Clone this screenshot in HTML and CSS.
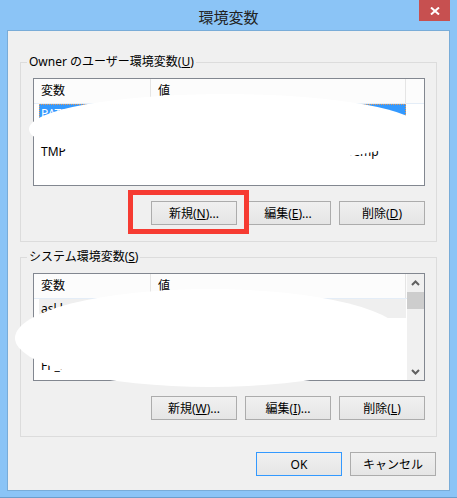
FILE: index.html
```html
<!DOCTYPE html>
<html lang="ja">
<head>
    <meta charset="UTF-8">
    <meta name="viewport" content="width=device-width, initial-scale=1.0">
    <title>環境変数</title>
    <link rel="stylesheet" href="styles.css">
</head>
<body>
    <div class="window">
        <div class="titlebar">
            <span></span>
            <h1 class="title">環境変数</h1>
            <button class="close-btn" aria-label="閉じる">
                <svg width="10" height="8" viewBox="0 0 10 8">
                    <path d="M1 0.5 L9 7.5 M9 0.5 L1 7.5" stroke="#fff" stroke-width="2" fill="none"/>
                </svg>
            </button>
        </div>

        <div class="client">
            <fieldset class="group">
                <legend>Owner のユーザー環境変数(<u>U</u>)</legend>
                <div class="list">
                    <div class="list-body">
                        <div class="list-head">
                            <span class="col-name">変数</span>
                            <span class="col-value">値</span>
                        </div>
                        <div class="row selected">
                            <span>PATH</span>
                            <span>C:\Users\Owner\AppData\Local\bin</span>
                        </div>
                        <div class="row">
                            <span>TEMP</span>
                            <span>%USERPROFILE%\AppData\Local\Temp</span>
                        </div>
                        <div class="row">
                            <span>TMP</span>
                            <span>%USERPROFILE%\AppData\Local\Temp</span>
                        </div>
                    </div>
                </div>
                <div class="btn-row">
                    <span class="marked"><button class="btn">新規(<u>N</u>)...</button></span>
                    <button class="btn">編集(<u>E</u>)...</button>
                    <button class="btn">削除(<u>D</u>)</button>
                </div>
            </fieldset>

            <fieldset class="group group-system">
                <legend>システム環境変数(<u>S</u>)</legend>
                <div class="list">
                    <div class="list-body">
                        <div class="list-head">
                            <span class="col-name">変数</span>
                            <span class="col-value">値</span>
                        </div>
                        <div class="row inactive">
                            <span>asl.log</span>
                            <span>Destination=file</span>
                        </div>
                        <div class="row">
                            <span>ComSpec</span>
                            <span>C:\Windows\system32\cmd.exe</span>
                        </div>
                        <div class="row">
                            <span>configsetroot</span>
                            <span>C:\Windows\ConfigSetRoot</span>
                        </div>
                        <div class="row">
                            <span>FP_NO_HOST</span>
                            <span>NO</span>
                        </div>
                    </div>
                    <div class="scrollbar">
                        <span class="scroll-arrow">
                            <svg width="9" height="6" viewBox="0 0 9 6"><path d="M1 5 L4.5 1.5 L8 5" stroke="#606060" stroke-width="2" fill="none"/></svg>
                        </span>
                        <span class="scroll-thumb"></span>
                        <span class="scroll-track"></span>
                        <span class="scroll-arrow">
                            <svg width="9" height="6" viewBox="0 0 9 6"><path d="M1 1 L4.5 4.5 L8 1" stroke="#606060" stroke-width="2" fill="none"/></svg>
                        </span>
                    </div>
                </div>
                <div class="btn-row">
                    <button class="btn">新規(<u>W</u>)...</button>
                    <button class="btn">編集(<u>I</u>)...</button>
                    <button class="btn">削除(<u>L</u>)</button>
                </div>
            </fieldset>

            <div class="dialog-buttons">
                <button class="btn default">OK</button>
                <button class="btn">キャンセル</button>
            </div>
        </div>

        <!-- masked values -->
        <div class="blot blot-user"></div>
        <div class="blot blot-system"></div>
    </div>
</body>
</html>
```

FILE: styles.css
```css
* {
    margin: 0;
    padding: 0;
    box-sizing: border-box;
}

body {
    font-family: 'Noto Sans', 'Noto Sans CJK JP', sans-serif;
    font-size: 12px;
    color: #000;
    background: #fff;
}

.window {
    position: relative;
    width: 457px;
    height: 498px;
    background: #8bc4f6;
    border-bottom: 1px solid #6b9ecb;
    padding: 0 7px 6px 7px;
    display: flex;
    flex-direction: column;
}

/* Title bar */
.titlebar {
    height: 30px;
    display: grid;
    grid-template-columns: 1fr auto 1fr;
    align-items: start;
}

.title {
    font-family: 'Noto Sans CJK JP', sans-serif;
    font-size: 15px;
    font-weight: normal;
    line-height: 30px;
    padding-top: 2px;
    color: #222;
}

.close-btn {
    justify-self: end;
    width: 31px;
    height: 21px;
    border: none;
    background: #c75050;
    display: flex;
    align-items: center;
    justify-content: center;
}

/* Dialog client area */
.client {
    flex: 1;
    background: #f0f0f0;
    border: 1px solid #79acd8;
    padding: 23px 12px 0 12px;
    display: flex;
    flex-direction: column;
}

.group {
    border: 1px solid #dcdcdc;
    padding: 8px 11px 16px 12px;
    min-width: 0;
}

.group legend {
    margin-left: -6px;
    padding: 0 2px;
    line-height: 16px;
}

.group-system {
    margin-top: 7px;
}

/* List view */
.list {
    height: 108px;
    border: 1px solid #828790;
    background: #fff;
    display: flex;
    overflow: hidden;
}

.list-body {
    flex: 1;
    overflow: hidden;
}

.list-head {
    height: 25px;
    display: flex;
    background: #fcfcfc;
    border-bottom: 1px solid #e4edf7;
}

.list-head span {
    line-height: 24px;
    padding-left: 7px;
    border-right: 1px solid #e5e5e5;
}

.col-name {
    width: 117px;
}

.col-value {
    width: 255px;
}

.row {
    height: 19px;
    width: 367px;
    margin-left: 5px;
    display: grid;
    grid-template-columns: 111px 1fr;
    line-height: 17px;
    white-space: nowrap;
    border: 1px solid transparent;
}

.row span {
    overflow: hidden;
    padding-left: 1px;
}

.row span + span {
    padding-left: 8px;
}

.row.selected {
    background: #3399ff;
    color: #fff;
    border: 1px dotted #e99a55;
}

.row.inactive {
    background: #efefef;
}

/* Scrollbar */
.scrollbar {
    width: 17px;
    background: #f0f0f0;
    display: flex;
    flex-direction: column;
}

.scroll-arrow {
    height: 17px;
    display: flex;
    align-items: center;
    justify-content: center;
}

.scroll-thumb {
    height: 17px;
    margin-top: 1px;
    background: #cdcdcd;
}

.scroll-track {
    flex: 1;
}

/* Buttons */
.btn-row {
    margin-top: 15px;
    display: flex;
    justify-content: flex-end;
    gap: 8px;
}

.btn {
    width: 86px;
    height: 24px;
    border: 1px solid #acacac;
    background: linear-gradient(#f0f0f0, #e5e5e5);
    font-family: inherit;
    font-size: 12px;
    color: #000;
}

.btn.default {
    border-color: #3399ff;
}

.marked {
    position: relative;
    display: flex;
}

.marked::after {
    content: "";
    position: absolute;
    left: -23px;
    top: -11px;
    right: -12px;
    bottom: -9px;
    border: 5px solid #f63b32;
}

.dialog-buttons {
    margin-top: 15px;
    padding-right: 1px;
    display: flex;
    justify-content: flex-end;
    gap: 8px;
}

/* White masks over private values */
.blot {
    position: absolute;
    background: #fff;
    border-radius: 50%;
}

.blot-user {
    left: 29px;
    top: 94px;
    width: 392px;
    height: 70px;
}

.blot-system {
    left: 15px;
    top: 289px;
    width: 390px;
    height: 98px;
}
```
